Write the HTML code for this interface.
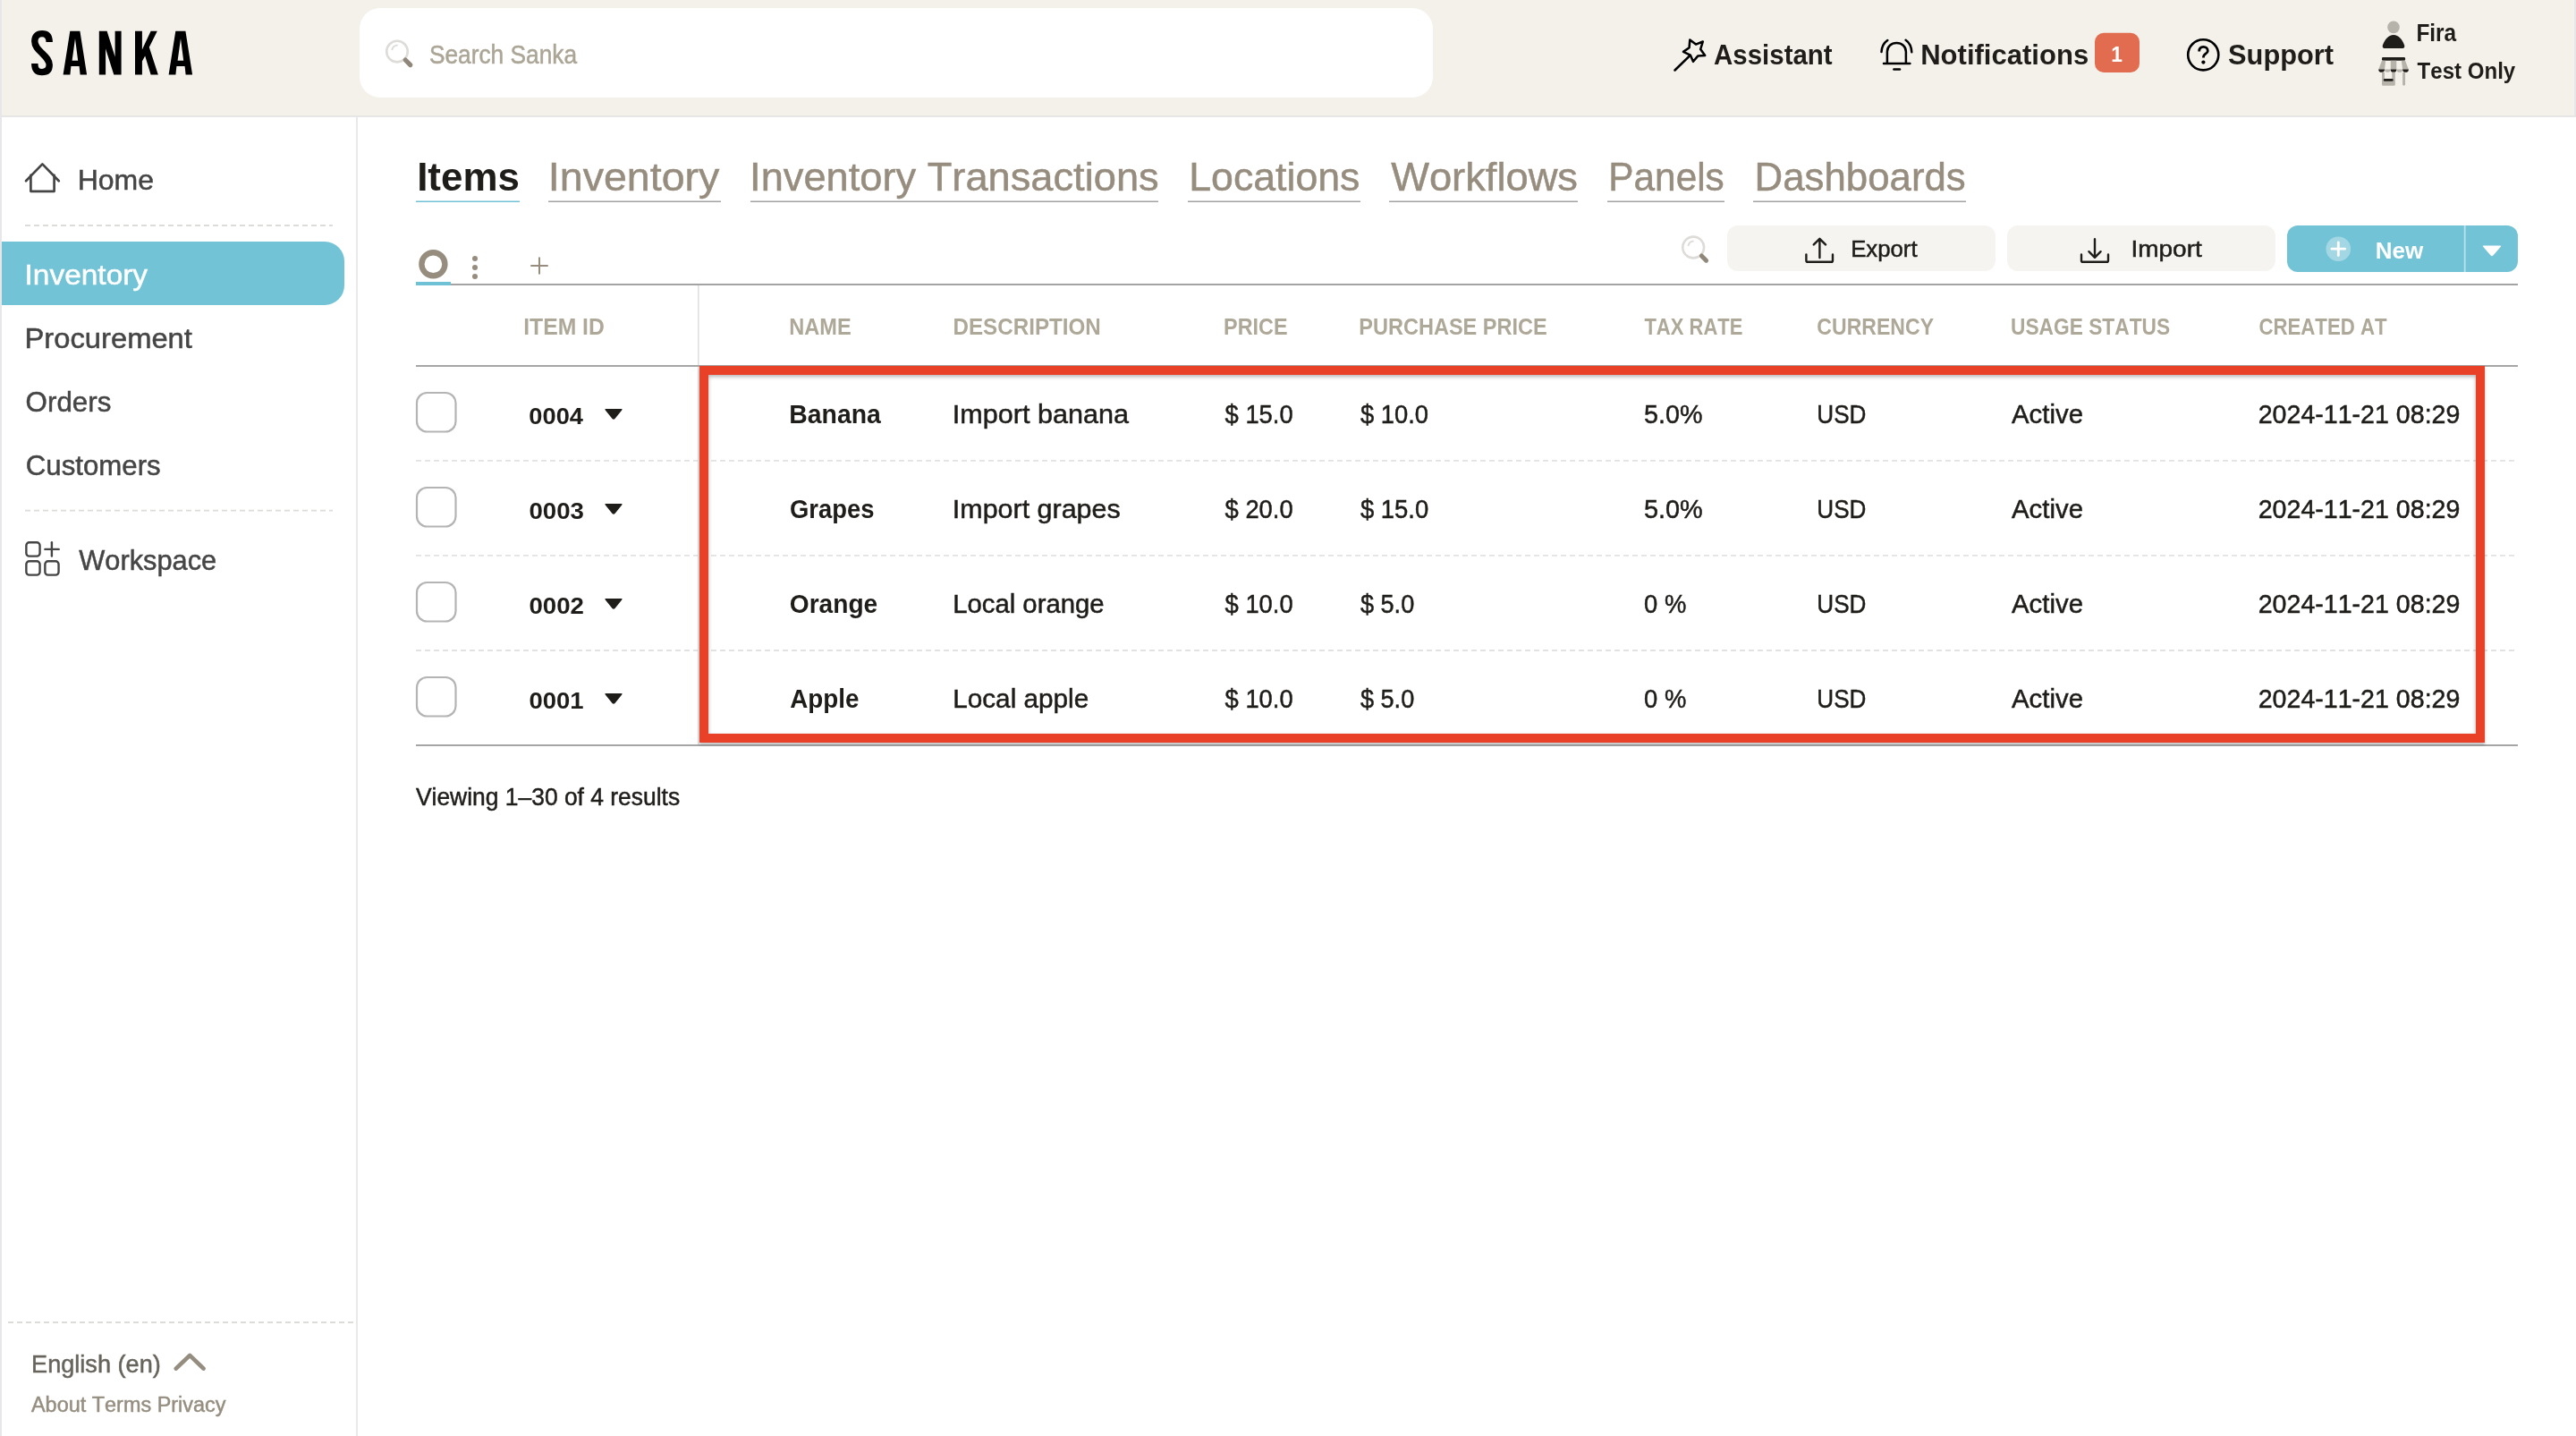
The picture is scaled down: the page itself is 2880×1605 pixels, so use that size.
<!DOCTYPE html>
<html><head><meta charset="utf-8"><title>Sanka - Items</title>
<style>
html,body{margin:0;padding:0;}
body{width:2880px;height:1605px;overflow:hidden;background:#fff;position:relative;font-family:"Liberation Sans",sans-serif;}
.abs{position:absolute;}
#hdr{left:0;top:0;width:2880px;height:129px;background:#f4f0ea;border-bottom:2px solid #e6e6e6;}
#lstrip{left:0;top:0;width:2px;height:1605px;background:#e7e7ea;}
#rstrip{left:2878px;top:0;width:2px;height:129px;background:#e7e7ea;}
#search{left:402px;top:9px;width:1200px;height:100px;background:#fff;border-radius:23px;}
#sbborder{left:398px;top:131px;width:2px;height:1474px;background:#e9e9e9;}
#pill{left:2px;top:270px;width:383px;height:71px;background:#73c3d7;border-radius:0 22px 22px 0;}
.btn{top:252px;height:51px;border-radius:12px;background:#f5f4f0;}
#export{left:1931px;width:300px;}
#import{left:2244px;width:300px;}
#new{left:2557px;top:252px;width:258px;height:52px;border-radius:12px;background:#73c3d7;}
#redbox{left:782px;top:409px;width:1976px;height:401px;border:10px solid #e84127;box-shadow:0 2px 3px rgba(0,0,0,.28), inset 0 2px 4px rgba(0,0,0,.3);}
svg{position:absolute;left:0;top:0;will-change:transform;}
text{font-family:"Liberation Sans",sans-serif;font-kerning:none;}
text.b{font-weight:bold;}
text.r{stroke-width:0.5px;}
</style></head><body>
<div id="hdr" class="abs"></div>
<div id="rstrip" class="abs"></div>
<div id="search" class="abs"></div>
<div id="sbborder" class="abs"></div>
<div id="pill" class="abs"></div>
<div id="export" class="abs btn"></div>
<div id="import" class="abs btn"></div>
<div id="new" class="abs"></div>
<svg width="2880" height="1605" viewBox="0 0 2880 1605">
<!-- logo -->
<g fill="#000">
<path d="M55.2,47 C55.2,40.5 52.2,37.6 47,37.6 C41.8,37.6 38.8,40.5 38.8,46 C38.8,52 42.8,55.5 47,59.5 C51.6,64 55.2,67.2 55.2,72.5 C55.2,78.2 52.2,80.6 47,80.6 C41.8,80.6 38.8,78.2 38.8,71" fill="none" stroke="#000" stroke-width="7.4"/>
<path fill-rule="evenodd" d="M70.6,83.6 L78.3,34.8 L89.4,34.8 L97.1,83.6 L89.6,83.6 L88.6,74.1 L79.4,74.1 L78.4,83.6 Z M80.6,67.8 L84,43.2 L87.2,67.8 Z"/>
<path d="M110.8,83.6 L110.8,34.8 L119.6,34.8 L128.6,63.5 L128.6,34.8 L135.6,34.8 L135.6,83.6 L127.3,83.6 L118.1,54.5 L118.1,83.6 Z"/>
<path d="M151,83.6 L151,34.8 L158.9,34.8 L158.9,55.5 L168.6,34.8 L175.8,34.8 L166.8,52.8 L176.8,83.6 L168.6,83.6 L162.2,62.5 L158.9,68.5 L158.9,83.6 Z"/>
<path fill-rule="evenodd" d="M188.6,83.6 L196.3,34.8 L207.4,34.8 L215.1,83.6 L207.6,83.6 L206.6,74.1 L197.4,74.1 L196.4,83.6 Z M198.6,67.8 L202,43.2 L205.2,67.8 Z"/>
</g>
<!-- search icon header -->
<circle cx="444" cy="57.6" r="11.8" fill="none" stroke="#dedcd8" stroke-width="2.6"/>
<path d="M438.2,56 A6.5,6.5 0 0 1 444.6,50.6" fill="none" stroke="#dedcd8" stroke-width="2"/>
<line x1="453.2" y1="67" x2="458.8" y2="72.6" stroke="#8f877a" stroke-width="5.2" stroke-linecap="round"/>
<!-- wand -->
<g fill="none" stroke="#000" stroke-width="2.55" stroke-linejoin="round" stroke-linecap="round">
<path d="M1889.3,44.6 L1896,49.6 L1903.8,46.5 L1901.2,55 L1906.2,61.9 L1898.2,62.6 L1893,68.8 L1889.8,61.6 L1882,57.9 L1888.6,53.2 Z"/>
<line x1="1889.6" y1="61.8" x2="1872.5" y2="78.5"/>
</g>
<!-- bell -->
<g fill="none" stroke="#000" stroke-width="2.5" stroke-linecap="round">
<path d="M2109.9,70.4 L2109.9,57.8 C2109.9,51.8 2114.5,48.1 2120.4,48.1 C2126.3,48.1 2130.9,51.8 2130.9,57.8 L2130.9,70.4"/>
<line x1="2106" y1="71" x2="2135.4" y2="71"/>
<line x1="2117.4" y1="77.6" x2="2124" y2="77.6"/>
<path d="M2110.3,45 C2106.2,47.8 2103.8,52 2103.5,58"/>
<path d="M2130.6,44.8 C2134.7,47.6 2137,52 2137.3,58.3"/>
</g>
<!-- badge -->
<rect x="2342" y="36.8" width="50" height="44.2" rx="10" fill="#e16c4f"/>
<!-- question -->
<g fill="none" stroke="#000" stroke-width="2.4" stroke-linecap="round">
<circle cx="2463.25" cy="61.35" r="17.05" stroke-width="2.6"/>
<path d="M2458.7,57.4 C2458.7,53.9 2460.8,52.3 2463.4,52.3 C2466.2,52.3 2468.3,54.3 2468.3,56.9 C2468.3,59.8 2463.5,60.6 2463.5,63.3 L2463.5,64.4" stroke-width="2.8" stroke-linecap="butt"/>
</g>
<circle cx="2463.4" cy="69.6" r="2.1" fill="#000"/>
<!-- person -->
<circle cx="2676" cy="30.4" r="6.8" fill="#b6b3ab"/>
<path d="M2667.2,54.1 Q2662.6,54.1 2664,50.2 C2666.2,44.4 2670.2,39.1 2676,39.1 C2681.8,39.1 2685.8,44.4 2688,50.2 Q2689.4,54.1 2684.8,54.1 Z" fill="#1f1d1a"/>
<!-- store -->
<rect x="2663" y="64.1" width="26.05" height="3.7" rx="1.2" fill="#1f1d1a"/>
<path d="M2663,67.8 L2667.2,67.8 L2666,77.8 L2659.2,77.8 Z M2672.8,67.8 L2679.3,67.8 L2679.3,77.8 L2672.8,77.8 Z M2684.8,67.8 L2689.05,67.8 L2692.9,77.8 L2686.2,77.8 Z" fill="#b6b3ab"/>
<path d="M2659.2,77.4 L2666,77.4 A3.4,3.4 0 0 1 2659.2,77.4 Z M2672.6,77.4 L2679.4,77.4 A3.4,3.4 0 0 1 2672.6,77.4 Z M2686.1,77.4 L2692.9,77.4 A3.4,3.4 0 0 1 2686.1,77.4 Z" fill="#1f1d1a"/>
<path d="M2666,77.4 L2672.6,77.4 A3.3,3.3 0 0 1 2666,77.4 Z M2679.4,77.4 L2686.1,77.4 A3.35,3.35 0 0 1 2679.4,77.4 Z" fill="#b6b3ab"/>
<path d="M2663,80.7 L2666,80.7 L2666,88.1 L2674.3,88.1 L2674.3,80.7 L2677.8,80.7 L2677.8,94.6 Q2677.8,95.8 2676.6,95.8 L2664.2,95.8 Q2663,95.8 2663,94.6 Z" fill="#b6b3ab"/>
<rect x="2664.8" y="88.1" width="10.9" height="2.6" rx="1.3" fill="#1f1d1a"/>
<rect x="2686.1" y="80.7" width="2.95" height="15.1" rx="1.45" fill="#b6b3ab"/>
<!-- home -->
<g fill="none" stroke="#454545" stroke-width="2.7" stroke-linejoin="round" stroke-linecap="round">
<path d="M29,202.2 L47.4,183.4 L65.8,202.2"/>
<path d="M34.4,195.8 L34.4,213.8 L60.6,213.8 L60.6,195.8"/>
</g>
<!-- dashed sidebar -->
<line x1="28" y1="252" x2="372" y2="252" stroke="#dcdcd8" stroke-width="1.8" stroke-dasharray="6 4"/>
<line x1="28" y1="570.6" x2="372" y2="570.6" stroke="#dcdcd8" stroke-width="1.8" stroke-dasharray="6 4"/>
<line x1="9" y1="1478" x2="396" y2="1478" stroke="#dcdcd8" stroke-width="1.8" stroke-dasharray="6 4"/>
<!-- workspace icon -->
<g fill="none" stroke="#454545" stroke-width="2.4">
<rect x="29.35" y="606.3" width="15.2" height="15.3" rx="3.4"/>
<rect x="29.35" y="627.3" width="15.2" height="15.3" rx="3.4"/>
<rect x="50.35" y="627.3" width="15.2" height="15.3" rx="3.4"/>
<line x1="57.9" y1="606.3" x2="57.9" y2="621.6" stroke-linecap="round"/>
<line x1="50.4" y1="613.9" x2="65.7" y2="613.9" stroke-linecap="round"/>
</g>
<!-- chevron footer -->
<path d="M196.8,1529.6 L212.2,1514.9 L227.5,1529.6" fill="none" stroke="#958e80" stroke-width="4.7" stroke-linecap="round" stroke-linejoin="round"/>
<!-- tab underlines -->
<g stroke-width="1.6">
<line x1="465" y1="225.3" x2="581" y2="225.3" stroke="#72c2d6"/>
<line x1="613" y1="225.3" x2="806" y2="225.3" stroke="#a3a3a3"/>
<line x1="839" y1="225.3" x2="1295" y2="225.3" stroke="#a3a3a3"/>
<line x1="1328" y1="225.3" x2="1521" y2="225.3" stroke="#a3a3a3"/>
<line x1="1553" y1="225.3" x2="1764" y2="225.3" stroke="#a3a3a3"/>
<line x1="1797" y1="225.3" x2="1928" y2="225.3" stroke="#a3a3a3"/>
<line x1="1960" y1="225.3" x2="2198" y2="225.3" stroke="#a3a3a3"/>
</g>
<!-- toolbar -->
<circle cx="484.4" cy="295.3" r="13" fill="none" stroke="#968d7f" stroke-width="6.4"/>
<g fill="#968d7f"><circle cx="531" cy="289.1" r="3"/><circle cx="531" cy="299.0" r="3"/><circle cx="531" cy="309.0" r="3"/></g>
<g stroke="#968d7f" stroke-width="2" stroke-linecap="round"><line x1="594" y1="297" x2="612" y2="297"/><line x1="603" y1="288.3" x2="603" y2="305.8"/></g>
<rect x="465" y="317" width="2350" height="2" fill="#a3a3a3"/>
<rect x="465" y="315" width="39" height="4" fill="#6fc1d6"/>
<!-- toolbar search -->
<circle cx="1893.2" cy="276.5" r="11.9" fill="none" stroke="#dedcd8" stroke-width="2.6"/>
<path d="M1887.4,275 A6.5,6.5 0 0 1 1893.6,269.4" fill="none" stroke="#dedcd8" stroke-width="2"/>
<line x1="1902.4" y1="286" x2="1907.6" y2="291.2" stroke="#8f877a" stroke-width="5" stroke-linecap="round"/>
<!-- upload -->
<g fill="none" stroke="#1f1d1a" stroke-width="2.4" stroke-linecap="round" stroke-linejoin="round">
<path d="M2034.4,288 L2034.4,267.4 M2027.8,273.4 L2034.4,266.8 L2041,273.4"/>
<path d="M2019.4,284.4 L2019.4,291.2 Q2019.4,292.8 2021,292.8 L2047.6,292.8 Q2049,292.8 2049,291.2 L2049,284.4"/>
<path d="M2342,267.2 L2342,287.6 M2335.4,281.2 L2342,287.8 L2348.6,281.2"/>
<path d="M2327,284.4 L2327,291.2 Q2327,292.8 2328.6,292.8 L2355.4,292.8 Q2357,292.8 2357,291.2 L2357,284.4"/>
</g>
<!-- new button -->
<rect x="2754.8" y="252" width="1.8" height="52" fill="#b9e1eb"/>
<circle cx="2614.3" cy="278.2" r="13.8" fill="#a3d7e4"/>
<g stroke="#fff" stroke-width="2.8" stroke-linecap="round"><line x1="2607" y1="278.2" x2="2621.6" y2="278.2"/><line x1="2614.3" y1="270.9" x2="2614.3" y2="285.5"/></g>
<path d="M2776.8,274.4 L2795.2,274.4 Q2797,274.4 2795.8,275.8 L2787.4,285.6 Q2786,287 2784.6,285.6 L2776.2,275.8 Q2775,274.4 2776.8,274.4 Z" fill="#fff"/>
<!-- table lines -->
<rect x="780" y="319" width="1.6" height="514" fill="#e0e0e0"/>
<rect x="465" y="408" width="2350" height="2" fill="#a6a6a6"/>
<rect x="465" y="832" width="2350" height="2" fill="#a6a6a6"/>
<rect x="466" y="439" width="43.5" height="43.5" rx="11.5" fill="#fff" stroke="#b4b4b4" stroke-width="2.2"/>
<path d="M677.2,457.0 L694.8,457.0 Q696.4,457.0 695.2,458.4 L687.5,468.0 Q686,469.59999999999997 684.5,468.0 L676.8,458.4 Q675.6,457.0 677.2,457.0 Z" fill="#1f1d1a"/>
<rect x="466" y="545" width="43.5" height="43.5" rx="11.5" fill="#fff" stroke="#b4b4b4" stroke-width="2.2"/>
<path d="M677.2,563.0 L694.8,563.0 Q696.4,563.0 695.2,564.4000000000001 L687.5,574.0 Q686,575.6 684.5,574.0 L676.8,564.4000000000001 Q675.6,563.0 677.2,563.0 Z" fill="#1f1d1a"/>
<rect x="466" y="651" width="43.5" height="43.5" rx="11.5" fill="#fff" stroke="#b4b4b4" stroke-width="2.2"/>
<path d="M677.2,669.0 L694.8,669.0 Q696.4,669.0 695.2,670.4000000000001 L687.5,680.0 Q686,681.6 684.5,680.0 L676.8,670.4000000000001 Q675.6,669.0 677.2,669.0 Z" fill="#1f1d1a"/>
<rect x="466" y="757" width="43.5" height="43.5" rx="11.5" fill="#fff" stroke="#b4b4b4" stroke-width="2.2"/>
<path d="M677.2,775.0 L694.8,775.0 Q696.4,775.0 695.2,776.4000000000001 L687.5,786.0 Q686,787.6 684.5,786.0 L676.8,776.4000000000001 Q675.6,775.0 677.2,775.0 Z" fill="#1f1d1a"/>
<line x1="465" y1="514.9" x2="2815" y2="514.9" stroke="#e2e2e2" stroke-width="1.8" stroke-dasharray="6 4"/>
<line x1="465" y1="620.9" x2="2815" y2="620.9" stroke="#e2e2e2" stroke-width="1.8" stroke-dasharray="6 4"/>
<line x1="465" y1="727.0" x2="2815" y2="727.0" stroke="#e2e2e2" stroke-width="1.8" stroke-dasharray="6 4"/>
<text class="r" fill="#aba596" stroke="#aba596" font-size="28.95" transform="translate(479.91 71.10) scale(0.9082 1)">Search Sanka</text>
<text class="b" fill="#1f1d1a" font-size="30.69" transform="translate(1916.09 71.90) scale(0.9595 1)">Assistant</text>
<text class="b" fill="#1f1d1a" font-size="30.69" transform="translate(2147.19 71.90) scale(1.0120 1)">Notifications</text>
<text class="b" fill="#ffffff" font-size="23.56" transform="translate(2360.29 68.90) scale(0.9682 1)">1</text>
<text class="b" fill="#1f1d1a" font-size="30.98" transform="translate(2491.09 71.80) scale(0.9938 1)">Support</text>
<text class="b" fill="#1f1d1a" font-size="27.20" transform="translate(2701.38 46.10) scale(0.8987 1)">Fira</text>
<text class="b" fill="#1f1d1a" font-size="26.33" transform="translate(2702.55 88.10) scale(0.9142 1)">Test Only</text>
<text class="r" fill="#454545" stroke="#454545" font-size="31.71" transform="translate(86.64 211.80) scale(1.0093 1)">Home</text>
<text class="r" fill="#ffffff" stroke="#ffffff" font-size="31.42" transform="translate(27.57 318.40) scale(1.0641 1)">Inventory</text>
<text class="r" fill="#454545" stroke="#454545" font-size="32.15" transform="translate(27.53 389.00) scale(1.0186 1)">Procurement</text>
<text class="r" fill="#454545" stroke="#454545" font-size="32.15" transform="translate(28.62 460.20) scale(0.9744 1)">Orders</text>
<text class="r" fill="#454545" stroke="#454545" font-size="31.71" transform="translate(28.83 530.90) scale(0.9844 1)">Customers</text>
<text class="r" fill="#454545" stroke="#454545" font-size="32.15" transform="translate(88.32 637.40) scale(0.9569 1)">Workspace</text>
<text class="r" fill="#67645c" stroke="#67645c" font-size="27.49" transform="translate(35.09 1533.80) scale(0.9863 1)">English (en)</text>
<text class="r" fill="#958e80" stroke="#958e80" font-size="24.44" transform="translate(34.98 1577.80) scale(0.9592 1)">About Terms Privacy</text>
<text class="b" fill="#1f1d1a" font-size="44.80" transform="translate(466.15 212.85) scale(0.9806 1)">Items</text>
<text class="r" fill="#968d7f" stroke="#968d7f" font-size="44.80" transform="translate(612.85 212.85) scale(1.0396 1)">Inventory</text>
<text class="r" fill="#968d7f" stroke="#968d7f" font-size="44.80" transform="translate(838.08 212.85) scale(1.0098 1)">Inventory Transactions</text>
<text class="r" fill="#968d7f" stroke="#968d7f" font-size="44.80" transform="translate(1329.27 212.85) scale(0.9972 1)">Locations</text>
<text class="r" fill="#968d7f" stroke="#968d7f" font-size="44.80" transform="translate(1555.13 212.85) scale(1.0113 1)">Workflows</text>
<text class="r" fill="#968d7f" stroke="#968d7f" font-size="44.80" transform="translate(1798.32 212.85) scale(0.9452 1)">Panels</text>
<text class="r" fill="#968d7f" stroke="#968d7f" font-size="44.80" transform="translate(1961.60 212.85) scale(0.9778 1)">Dashboards</text>
<text class="r" fill="#1f1d1a" stroke="#1f1d1a" font-size="25.67" transform="translate(2069.14 286.85) scale(1.0034 1)">Export</text>
<text class="r" fill="#1f1d1a" stroke="#1f1d1a" font-size="25.02" transform="translate(2382.50 287.00) scale(1.1181 1)">Import</text>
<text class="b" fill="#ffffff" font-size="25.45" transform="translate(2655.66 289.20) scale(1.0224 1)">New</text>
<text class="b" fill="#aea898" font-size="26.04" transform="translate(585.22 373.90) scale(0.9496 1)">ITEM ID</text>
<text class="b" fill="#aea898" font-size="26.04" transform="translate(882.25 373.90) scale(0.9058 1)">NAME</text>
<text class="b" fill="#aea898" font-size="26.04" transform="translate(1065.52 373.90) scale(0.9291 1)">DESCRIPTION</text>
<text class="b" fill="#aea898" font-size="26.04" transform="translate(1368.12 373.90) scale(0.8968 1)">PRICE</text>
<text class="b" fill="#aea898" font-size="26.04" transform="translate(1519.35 373.90) scale(0.9031 1)">PURCHASE PRICE</text>
<text class="b" fill="#aea898" font-size="26.04" transform="translate(1838.42 373.90) scale(0.8446 1)">TAX RATE</text>
<text class="b" fill="#aea898" font-size="26.04" transform="translate(2031.35 373.90) scale(0.8861 1)">CURRENCY</text>
<text class="b" fill="#aea898" font-size="26.04" transform="translate(2248.01 373.90) scale(0.8733 1)">USAGE STATUS</text>
<text class="b" fill="#aea898" font-size="26.04" transform="translate(2525.38 373.90) scale(0.8541 1)">CREATED AT</text>
<text class="b" fill="#1f1d1a" font-size="26.55" transform="translate(591.36 473.85) scale(1.0276 1)">0004</text>
<text class="b" fill="#1f1d1a" font-size="30.11" transform="translate(882.22 472.95) scale(0.9441 1)">Banana</text>
<text class="r" fill="#1f1d1a" stroke="#1f1d1a" font-size="30.11" transform="translate(1064.80 472.95) scale(1.0156 1)">Import banana</text>
<text class="r" fill="#1f1d1a" stroke="#1f1d1a" font-size="30.11" transform="translate(1369.56 472.95) scale(0.9093 1)">$ 15.0</text>
<text class="r" fill="#1f1d1a" stroke="#1f1d1a" font-size="30.11" transform="translate(1520.94 472.95) scale(0.9096 1)">$ 10.0</text>
<text class="r" fill="#1f1d1a" stroke="#1f1d1a" font-size="30.11" transform="translate(1838.01 472.95) scale(0.9536 1)">5.0%</text>
<text class="r" fill="#1f1d1a" stroke="#1f1d1a" font-size="30.11" transform="translate(2031.31 472.95) scale(0.8682 1)">USD</text>
<text class="r" fill="#1f1d1a" stroke="#1f1d1a" font-size="30.11" transform="translate(2249.03 472.95) scale(0.9754 1)">Active</text>
<text class="r" fill="#1f1d1a" stroke="#1f1d1a" font-size="28.80" transform="translate(2524.70 472.65) scale(0.9927 1)">2024-11-21 08:29</text>
<text class="b" fill="#1f1d1a" font-size="26.55" transform="translate(591.45 579.85) scale(1.0415 1)">0003</text>
<text class="b" fill="#1f1d1a" font-size="30.11" transform="translate(882.92 578.95) scale(0.9113 1)">Grapes</text>
<text class="r" fill="#1f1d1a" stroke="#1f1d1a" font-size="30.11" transform="translate(1064.87 578.95) scale(1.0111 1)">Import grapes</text>
<text class="r" fill="#1f1d1a" stroke="#1f1d1a" font-size="30.11" transform="translate(1369.56 578.95) scale(0.9093 1)">$ 20.0</text>
<text class="r" fill="#1f1d1a" stroke="#1f1d1a" font-size="30.11" transform="translate(1520.93 578.95) scale(0.9115 1)">$ 15.0</text>
<text class="r" fill="#1f1d1a" stroke="#1f1d1a" font-size="30.11" transform="translate(1838.00 578.95) scale(0.9584 1)">5.0%</text>
<text class="r" fill="#1f1d1a" stroke="#1f1d1a" font-size="30.11" transform="translate(2031.31 578.95) scale(0.8682 1)">USD</text>
<text class="r" fill="#1f1d1a" stroke="#1f1d1a" font-size="30.11" transform="translate(2249.03 578.95) scale(0.9754 1)">Active</text>
<text class="r" fill="#1f1d1a" stroke="#1f1d1a" font-size="28.80" transform="translate(2524.70 578.65) scale(0.9927 1)">2024-11-21 08:29</text>
<text class="b" fill="#1f1d1a" font-size="26.55" transform="translate(591.45 685.85) scale(1.0417 1)">0002</text>
<text class="b" fill="#1f1d1a" font-size="30.11" transform="translate(882.80 684.95) scale(0.9342 1)">Orange</text>
<text class="r" fill="#1f1d1a" stroke="#1f1d1a" font-size="30.11" transform="translate(1065.14 684.95) scale(0.9738 1)">Local orange</text>
<text class="r" fill="#1f1d1a" stroke="#1f1d1a" font-size="30.11" transform="translate(1369.56 684.95) scale(0.9093 1)">$ 10.0</text>
<text class="r" fill="#1f1d1a" stroke="#1f1d1a" font-size="30.11" transform="translate(1520.93 684.95) scale(0.9009 1)">$ 5.0</text>
<text class="r" fill="#1f1d1a" stroke="#1f1d1a" font-size="30.11" transform="translate(1838.08 684.95) scale(0.9097 1)">0 %</text>
<text class="r" fill="#1f1d1a" stroke="#1f1d1a" font-size="30.11" transform="translate(2031.31 684.95) scale(0.8682 1)">USD</text>
<text class="r" fill="#1f1d1a" stroke="#1f1d1a" font-size="30.11" transform="translate(2249.03 684.95) scale(0.9754 1)">Active</text>
<text class="r" fill="#1f1d1a" stroke="#1f1d1a" font-size="28.80" transform="translate(2524.70 684.65) scale(0.9927 1)">2024-11-21 08:29</text>
<text class="b" fill="#1f1d1a" font-size="26.55" transform="translate(591.49 791.85) scale(1.0349 1)">0001</text>
<text class="b" fill="#1f1d1a" font-size="30.11" transform="translate(883.17 790.95) scale(0.9235 1)">Apple</text>
<text class="r" fill="#1f1d1a" stroke="#1f1d1a" font-size="30.11" transform="translate(1065.21 790.95) scale(0.9869 1)">Local apple</text>
<text class="r" fill="#1f1d1a" stroke="#1f1d1a" font-size="30.11" transform="translate(1369.56 790.95) scale(0.9093 1)">$ 10.0</text>
<text class="r" fill="#1f1d1a" stroke="#1f1d1a" font-size="30.11" transform="translate(1520.93 790.95) scale(0.9009 1)">$ 5.0</text>
<text class="r" fill="#1f1d1a" stroke="#1f1d1a" font-size="30.11" transform="translate(1838.08 790.95) scale(0.9097 1)">0 %</text>
<text class="r" fill="#1f1d1a" stroke="#1f1d1a" font-size="30.11" transform="translate(2031.31 790.95) scale(0.8682 1)">USD</text>
<text class="r" fill="#1f1d1a" stroke="#1f1d1a" font-size="30.11" transform="translate(2249.03 790.95) scale(0.9754 1)">Active</text>
<text class="r" fill="#1f1d1a" stroke="#1f1d1a" font-size="28.80" transform="translate(2524.70 790.65) scale(0.9927 1)">2024-11-21 08:29</text>
<text class="r" fill="#1f1d1a" stroke="#1f1d1a" font-size="28.00" transform="translate(464.93 900.00) scale(0.9438 1)">Viewing 1–30 of 4 results</text>
</svg>
<div id="redbox" class="abs"></div>
<div id="lstrip" class="abs"></div>
</body></html>
